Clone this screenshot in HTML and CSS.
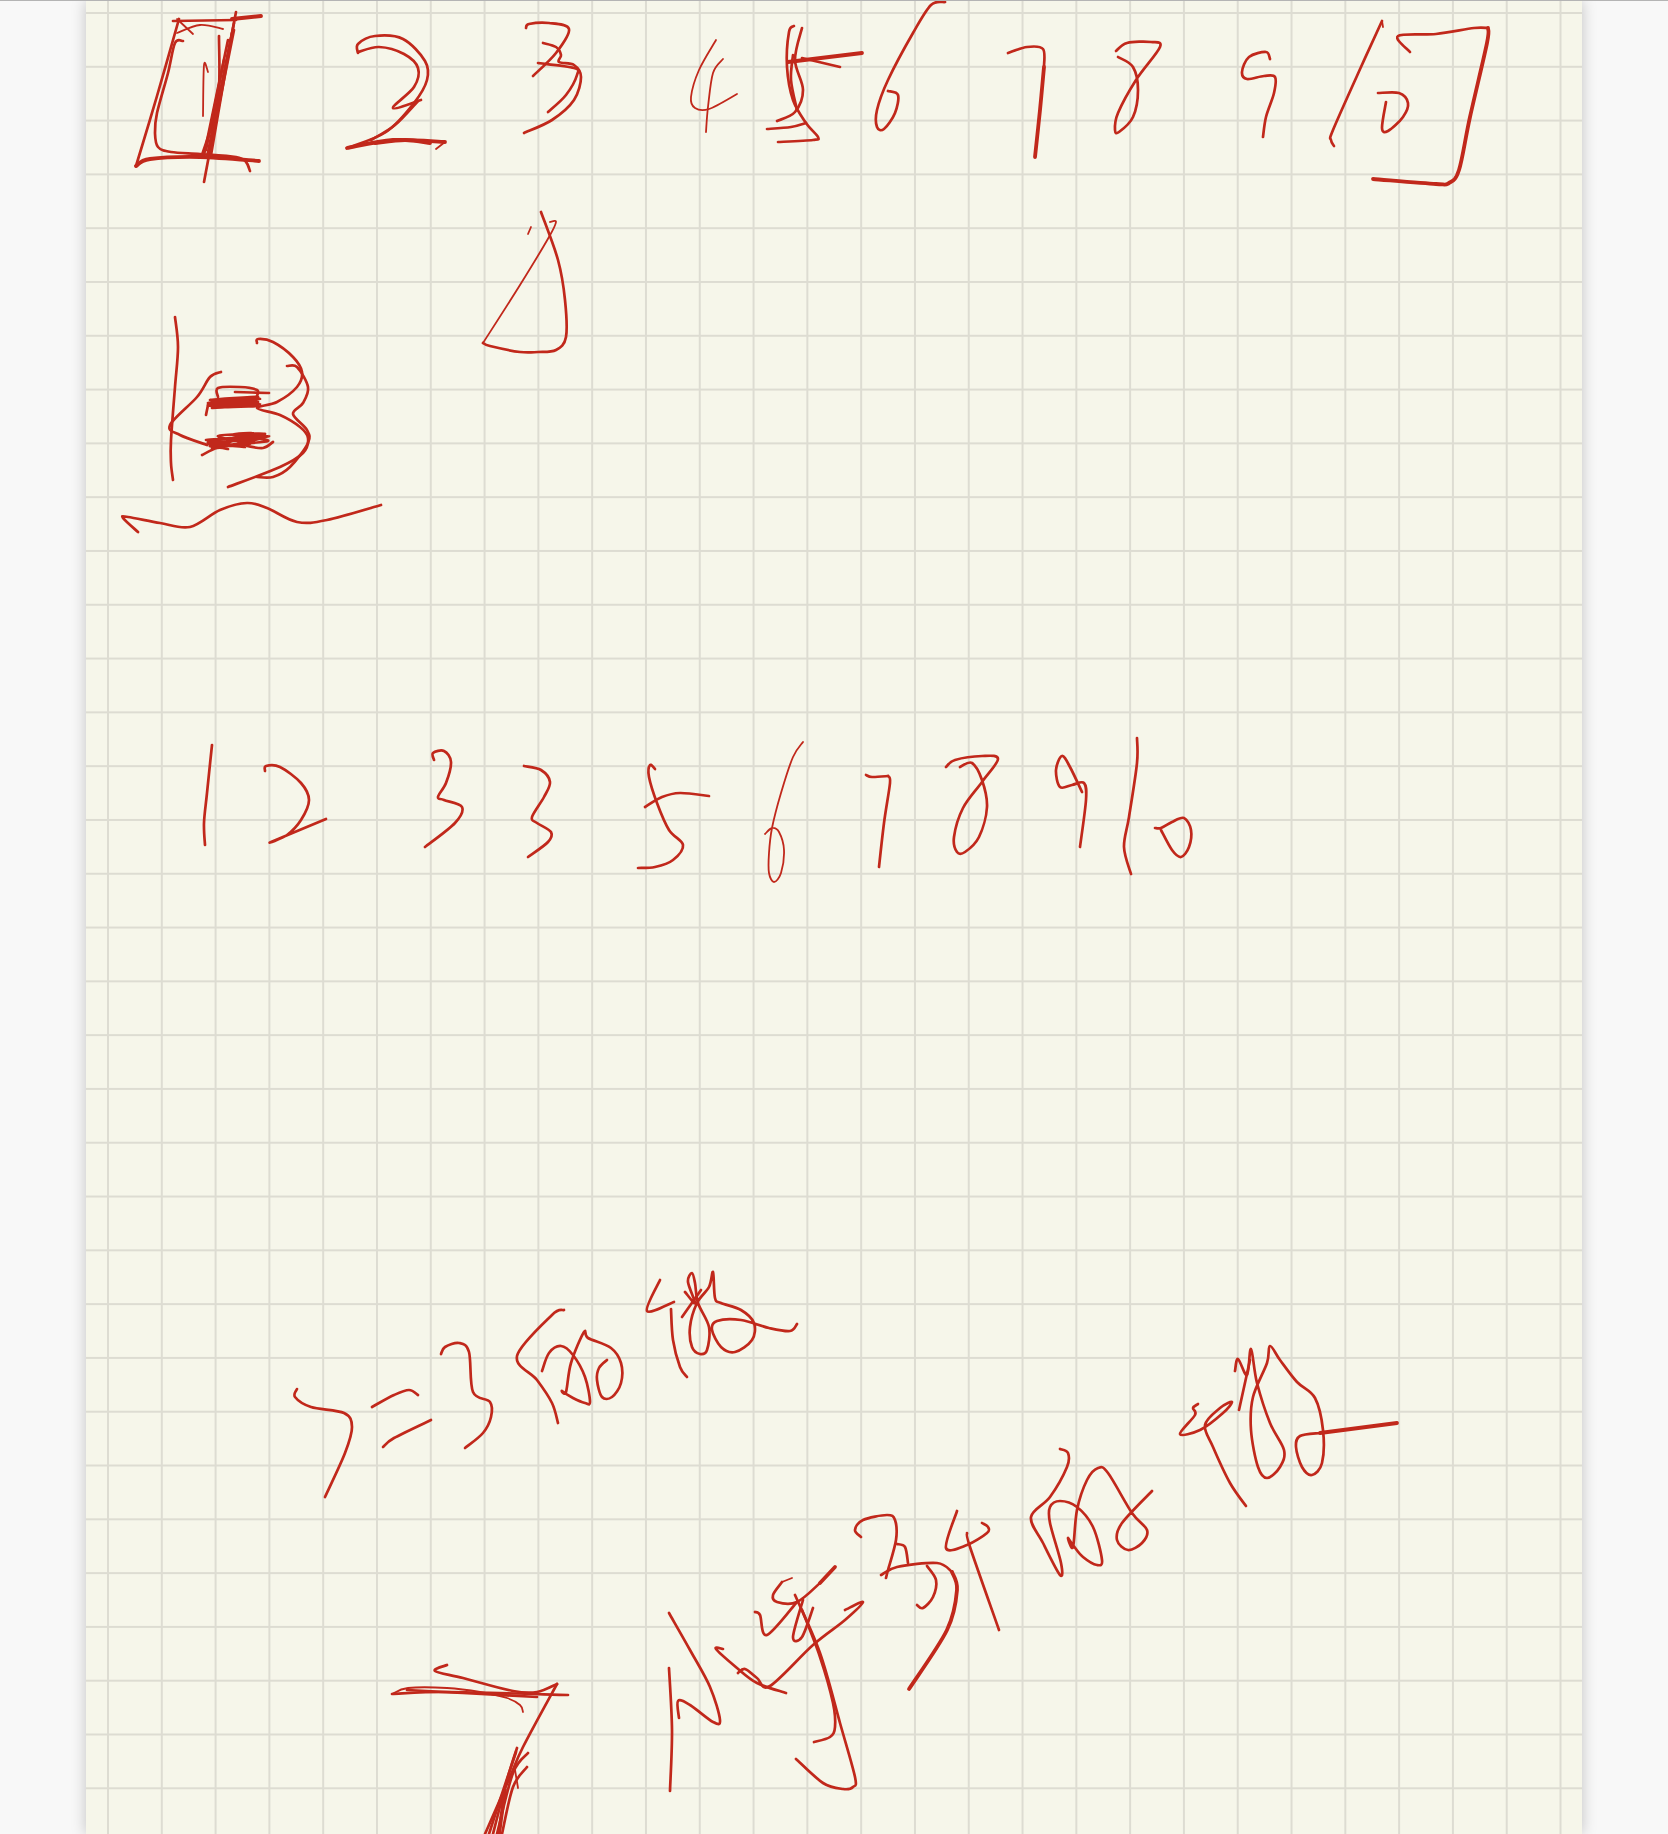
FILE: index.html
```html
<!DOCTYPE html>
<html>
<head>
  <meta charset="UTF-8">
  <title>Notes</title>
  <link rel="stylesheet" href="styles.css">
</head>
<body>
  <div class="viewer">
    <div class="paper">
      <svg id="ink" class="ink" viewBox="86 1 1496 1833" width="1496" height="1833"></svg>
    </div>
  </div>
  <script src="ink.js"></script>
</body>
</html>
```

FILE: styles.css
```css
* {
  margin: 0;
  padding: 0;
  box-sizing: border-box;
}

body {
  background: #f8f8f8;
  border-top: 1px solid #b4b4b4;
  height: 1834px;
  overflow: hidden;
}

.viewer {
  display: flex;
  justify-content: center;
}

/* grid paper */
.paper {
  width: 1496px;
  height: 1833px;
  background-color: #f6f6ea;
  background-image:
    linear-gradient(to right, #dddcd2 2px, transparent 2px),
    linear-gradient(to bottom, #dddcd2 2px, transparent 2px);
  background-size: 53.8px 53.8px;
  background-position: 21px 11px;
  box-shadow: 0 0 14px rgba(0, 0, 0, 0.22);
  overflow: hidden;
}

.ink {
  display: block;
}

.ink path {
  fill: none;
  stroke: #c1281b;
  stroke-linecap: round;
  stroke-linejoin: round;
}

.thin { stroke-width: 1.8; }
.mid { stroke-width: 2.7; }
.thick { stroke-width: 3.8; }
```

FILE: ink.js
```js
// pen strokes, page coordinates: [class, x, y, x, y, ...]
var strokes = [
  // boxed 1
  ['mid', 179,19, 157,96, 136,166],
  ['thick', 136,166, 150,159, 200,157, 259,161],
  ['mid', 173,21, 236,20],
  ['thick', 232,19, 261,16],
  ['thin', 177,19, 193,34],
  ['thin', 177,33, 200,25, 223,29],
  ['mid', 183,41, 175,43, 168,73, 157,113, 155,133, 158,147, 171,152, 200,154, 236,157, 246,162, 250,171],
  ['thin', 203,116, 204,65, 208,72],
  ['mid', 236,12, 204,182],
  ['mid', 219,36, 218,100, 202,155],
  ['mid', 234,23, 207,157],
  ['mid', 232,33, 211,155],
  ['mid', 228,40, 204,155],
  ['mid', 224,60, 206,150],
  ['mid', 234,30, 214,130],
  // 2
  ['mid', 358,53, 358,44, 375,36, 403,39, 425,61, 427,80, 414,103, 386,132, 347,148],
  ['thick', 347,148, 393,140, 445,142],
  ['thick', 375,143, 405,140, 430,143],
  ['thin', 445,142, 436,149],
  ['mid', 358,52, 379,47, 404,54, 418,68, 414,87, 393,108, 421,100],
  ['mid', 418,101, 395,125, 371,140],
  // 3
  ['mid', 526,28, 529,24, 549,23, 569,29, 556,53, 533,76],
  ['mid', 543,43, 556,47, 561,55, 559,62, 574,65, 581,77, 574,100, 552,120, 524,133],
  ['mid', 538,63, 574,68, 577,75, 566,95, 548,112],
  // triangle
  ['thin', 550,222, 556,222, 549,237, 520,285, 483,343],
  ['mid', 483,343, 490,346, 520,352, 538,352, 556,350, 566,337, 565,300, 558,260, 541,212],
  ['thin', 531,227, 528,234],
  // 4
  ['thin', 716,40, 699,70, 691,97, 695,108, 709,109, 737,94],
  ['thin', 723,59, 713,73, 708,107, 706,132],
  // 5
  ['mid', 794,26, 789,32, 787,67, 793,100, 806,123, 818,137, 813,140, 778,142],
  ['mid', 802,28, 795,60, 803,90, 795,112, 777,121],
  ['thick', 788,62, 862,53],
  ['mid', 802,58, 840,67],
  ['mid', 767,129, 791,127, 806,123],
  ['mid', 793,55, 791,80, 797,110],
  // 6
  ['mid', 945,2, 931,5, 913,33, 888,80, 877,110, 877,127, 884,129, 895,113, 898,95, 888,91],
  // 7
  ['mid', 1008,53, 1027,47, 1043,49, 1044,67],
  ['thick', 1044,67, 1040,110, 1035,157],
  // 8
  ['mid', 1116,51, 1127,43, 1151,42, 1160,47, 1136,80, 1118,113, 1115,130, 1119,132, 1133,117, 1138,90, 1133,67, 1118,57],
  // 9
  ['mid', 1270,59, 1266,52, 1249,57, 1242,72, 1247,79, 1264,76, 1275,77, 1274,93, 1266,117, 1263,137],
  // 10 in bracket
  ['mid', 1382,21, 1361,67, 1333,130, 1331,140, 1334,146],
  ['thin', 1382,21, 1383,27],
  ['mid', 1378,93, 1399,93, 1408,103, 1403,117, 1388,131, 1382,128, 1386,102],
  ['mid', 1410,52, 1398,36, 1436,34, 1474,28, 1488,28],
  ['thick', 1488,28, 1487,43, 1470,117, 1459,170, 1449,183, 1436,184, 1373,179],
  // left scribble
  ['mid', 175,317, 178,347, 175,387, 171,440, 171,463, 173,480],
  ['mid', 221,372, 210,377, 197,397, 170,425, 180,435, 207,445],
  ['mid', 218,397, 218,388, 240,387, 257,390, 257,396],
  ['mid', 235,392, 269,393],
  ['mid', 208,405, 258,397, 210,400, 260,399, 208,403, 256,400, 209,406, 258,402, 212,408, 260,404, 210,404, 254,398, 214,407, 258,406],
  ['mid', 206,415, 208,405],
  ['mid', 206,440, 269,436, 208,444, 262,438, 212,448, 253,434, 233,435, 268,441, 210,446, 250,444, 218,436, 265,434, 208,442, 245,447],
  ['mid', 202,455, 217,448, 228,449],
  ['mid', 247,446, 263,448, 273,442],
  ['mid', 257,343, 258,339, 273,342, 293,357, 302,372, 297,387, 277,402, 257,408, 280,415, 300,427, 308,438, 303,453, 280,467, 228,487],
  ['mid', 287,366, 297,367, 308,387, 303,403, 293,414, 307,430, 308,443, 290,467, 273,477, 257,477],
  ['mid', 138,532, 123,518, 128,517, 160,523, 190,527, 220,510, 247,503, 267,508, 297,522, 327,520, 381,505],
  // second row of numbers
  ['mid', 212,745, 207,793, 204,823, 205,845],
  ['mid', 265,771, 266,766, 280,767, 301,783, 309,800, 301,820, 287,835, 271,842, 326,819],
  ['mid', 434,760, 433,753, 444,751, 451,762, 446,783, 438,797, 444,800, 462,807, 455,823, 425,847],
  ['mid', 524,766, 541,770, 550,782, 544,797, 532,817, 537,823, 551,832, 548,842, 528,857],
  ['mid', 655,769, 650,765, 649,777, 657,803, 669,830, 683,845, 673,860, 655,867, 638,868],
  ['mid', 645,807, 662,797, 680,793, 709,796],
  ['thin', 803,742, 793,757, 781,793, 772,828, 769,853, 769,873, 774,882, 781,873, 784,850, 779,832, 772,828, 765,834],
  ['mid', 866,775, 872,777, 888,776],
  ['mid', 888,776, 890,783, 884,823, 879,867],
  ['mid', 946,767, 955,760, 982,756, 998,759, 982,782, 963,808, 954,837, 957,852, 965,852, 979,837, 987,807, 982,780, 972,763, 960,767],
  ['mid', 1082,792, 1070,767, 1062,756, 1056,770, 1060,787, 1072,785, 1084,783, 1086,800, 1080,847],
  ['mid', 1137,738, 1137,763, 1129,817, 1124,847, 1131,874],
  ['mid', 1155,828, 1161,828, 1172,822, 1184,818, 1191,830, 1189,847, 1181,857, 1172,850, 1161,830],
  // 7=3 line
  ['mid', 297,1389, 295,1397, 311,1407, 344,1413, 352,1427, 345,1453, 325,1497],
  ['mid', 372,1407, 394,1395, 409,1390, 418,1395],
  ['mid', 383,1447, 394,1438, 431,1420],
  ['mid', 441,1354, 445,1347, 459,1343, 469,1352, 473,1392, 490,1402, 491,1417, 483,1433, 465,1448],
  ['mid', 564,1310, 552,1315, 517,1356, 537,1380, 552,1403, 558,1423],
  ['mid', 542,1371, 549,1353, 561,1346, 573,1355, 585,1377, 590,1402, 585,1403, 573,1398, 562,1391, 566,1392, 571,1363, 584,1332, 588,1338, 611,1348, 621,1363, 621,1383, 612,1397, 602,1397, 597,1380, 599,1368, 607,1360],
  ['mid', 660,1280, 647,1311, 674,1302],
  ['mid', 671,1309, 673,1340, 680,1367, 687,1377],
  ['mid', 685,1292, 695,1303, 688,1282, 692,1273, 695,1283, 698,1303, 709,1327, 707,1350, 700,1354, 692,1347, 690,1327, 697,1303, 709,1287, 713,1272, 715,1298, 721,1303, 741,1310, 754,1323, 752,1340, 735,1352, 721,1347, 712,1330, 717,1321, 741,1320, 769,1328, 790,1331, 797,1324],
  ['mid', 701,1290, 682,1317],
  // bottom line, right
  ['mid', 1060,1449, 1068,1453, 1067,1467, 1050,1497, 1031,1517, 1043,1543, 1060,1575, 1061,1563, 1050,1523, 1050,1507, 1060,1501, 1077,1507, 1093,1527, 1102,1560, 1097,1565, 1083,1557, 1073,1545, 1068,1538, 1073,1547, 1077,1510, 1087,1480, 1098,1468, 1108,1473, 1132,1513, 1147,1530, 1142,1543, 1128,1550, 1117,1540, 1122,1523, 1152,1491],
  ['mid', 1198,1404, 1193,1408, 1195,1415, 1180,1434, 1200,1430, 1223,1413, 1232,1402, 1220,1408, 1205,1425, 1213,1447, 1230,1483, 1246,1506],
  ['mid', 1235,1371, 1238,1359, 1247,1375, 1251,1349, 1257,1383, 1270,1423, 1284,1450, 1280,1467, 1267,1478, 1258,1467, 1251,1430, 1253,1397, 1267,1363, 1270,1346, 1280,1360, 1297,1382, 1315,1398, 1323,1430, 1322,1463, 1312,1475, 1302,1467, 1296,1447, 1300,1436, 1320,1433],
  ['thick', 1320,1433, 1397,1423],
  ['mid', 1250,1360, 1239,1410],
  // 3 and 4
  ['mid', 861,1537, 855,1530, 863,1520, 887,1515, 895,1520, 896,1540, 888,1570, 886,1578],
  ['mid', 881,1575, 897,1567, 937,1563, 952,1572],
  ['thick', 952,1572, 957,1590, 947,1630, 909,1689],
  ['mid', 897,1544, 905,1547, 908,1563],
  ['mid', 927,1566, 936,1580, 933,1597, 923,1608, 917,1605],
  ['mid', 957,1511, 946,1548, 967,1545, 987,1533, 988,1527, 982,1523],
  ['mid', 967,1533, 970,1547, 999,1630],
  // long 7
  ['thin', 392,1694, 408,1688, 447,1688, 480,1692, 507,1698, 520,1705, 523,1712],
  ['mid', 407,1690, 463,1693, 537,1697],
  ['mid', 392,1694, 450,1692, 568,1695],
  ['mid', 447,1665, 435,1671, 463,1678, 513,1691, 537,1692, 557,1684],
  ['mid', 557,1684, 523,1747, 510,1777, 485,1834],
  ['mid', 517,1748, 507,1780, 493,1834],
  ['mid', 528,1753, 513,1773, 497,1834],
  ['mid', 527,1767, 513,1787, 502,1834],
  ['mid', 516,1752, 500,1800, 489,1834],
  ['thick', 505,1790, 499,1834],
  ['thin', 518,1788, 515,1770],
  ['mid', 670,1791, 672,1730, 669,1668],
  ['mid', 669,1613, 690,1650, 710,1687, 720,1720, 713,1722, 690,1705, 678,1701, 679,1718],
  ['mid', 723,1649, 716,1649, 737,1668, 757,1683, 786,1693],
  ['mid', 738,1673, 745,1669, 757,1678, 770,1686, 813,1645, 845,1620, 863,1602, 845,1610],
  ['mid', 782,1582, 773,1595, 777,1602, 797,1602, 820,1583],
  ['thick', 820,1583, 835,1567],
  ['thin', 792,1578, 782,1582],
  ['mid', 755,1612, 760,1615, 767,1635, 797,1602],
  ['mid', 803,1600, 793,1637, 802,1637, 813,1608],
  ['mid', 795,1595, 820,1653, 840,1723, 855,1777, 853,1787, 843,1789, 823,1783, 796,1759],
  ['mid', 802,1610, 820,1657, 833,1703, 835,1727, 830,1737, 814,1742]
];

var ink = document.getElementById('ink');

// catmull-rom through the sampled points
function smooth(p) {
  var d = 'M' + p[0] + ' ' + p[1];
  var n = p.length / 2;
  function x(i) { return p[Math.max(0, Math.min(n - 1, i)) * 2]; }
  function y(i) { return p[Math.max(0, Math.min(n - 1, i)) * 2 + 1]; }
  for (var i = 0; i < n - 1; i++) {
    d += 'C' + (x(i) + (x(i + 1) - x(i - 1)) / 6).toFixed(1) + ' ' + (y(i) + (y(i + 1) - y(i - 1)) / 6).toFixed(1) +
      ' ' + (x(i + 1) - (x(i + 2) - x(i)) / 6).toFixed(1) + ' ' + (y(i + 1) - (y(i + 2) - y(i)) / 6).toFixed(1) +
      ' ' + x(i + 1) + ' ' + y(i + 1);
  }
  return d;
}

strokes.forEach(function (s) {
  var path = document.createElementNS('http://www.w3.org/2000/svg', 'path');
  path.setAttribute('class', s[0]);
  path.setAttribute('d', smooth(s.slice(1)));
  ink.appendChild(path);
});
```
